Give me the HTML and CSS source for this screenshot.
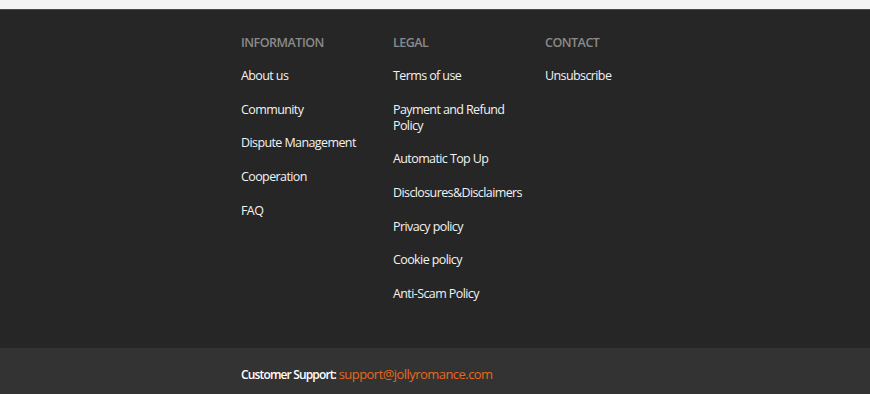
FILE: index.html
```html
<!DOCTYPE html>
<html lang="en">
<head>
  <meta charset="UTF-8">
  <meta name="viewport" content="width=device-width, initial-scale=1.0">
  <title>Footer - JollyRomance</title>
  <link rel="stylesheet" href="styles.css">
</head>
<body>
  <div class="top-strip"></div>

  <footer class="footer">
    <div class="footer-inner">
      <div class="footer-col">
        <h3>Information</h3>
        <ul>
          <li><a href="#">About us</a></li>
          <li><a href="#">Community</a></li>
          <li><a href="#">Dispute Management</a></li>
          <li><a href="#">Cooperation</a></li>
          <li><a href="#">FAQ</a></li>
        </ul>
      </div>

      <div class="footer-col">
        <h3>Legal</h3>
        <ul>
          <li><a href="#">Terms of use</a></li>
          <li><a href="#">Payment and Refund Policy</a></li>
          <li><a href="#">Automatic Top Up</a></li>
          <li><a href="#">Disclosures&amp;Disclaimers</a></li>
          <li><a href="#">Privacy policy</a></li>
          <li><a href="#">Cookie policy</a></li>
          <li><a href="#">Anti-Scam Policy</a></li>
        </ul>
      </div>

      <div class="footer-col">
        <h3>Contact</h3>
        <ul>
          <li><a href="#">Unsubscribe</a></li>
        </ul>
      </div>
    </div>
  </footer>

  <div class="support-bar">
    <div class="support-inner">
      <span class="support-label">Customer Support:</span>
      <a class="support-mail" href="#">support@jollyromance.com</a>
    </div>
  </div>
</body>
</html>
```

FILE: styles.css
```css
* {
  margin: 0;
  padding: 0;
  box-sizing: border-box;
}

body {
  font-family: 'Open Sans', 'Noto Sans', sans-serif;
  background: #333333;
  color: #f0f0f0;
  font-size: 12.5px;
  line-height: 16px;
  letter-spacing: -0.6px;
}

a {
  color: inherit;
  text-decoration: none;
}

.top-strip {
  height: 10px;
  background: #f4f4f4;
  border-bottom: 1px solid #dcdcdc;
}

.footer {
  background: #262626;
  padding: 25px 0 46px;
  border-top: 1px solid #4a4a4a;
  margin-top: -1px;
}

.footer-inner {
  width: 388px;
  margin: 0 auto;
  display: grid;
  grid-template-columns: 152px 152px auto;
}

.footer-col h3 {
  font-size: 12.5px;
  font-weight: 600;
  letter-spacing: -0.5px;
  text-transform: uppercase;
  color: #8a8a8a;
  margin-bottom: 17px;
}

.footer-col ul {
  list-style: none;
  display: flex;
  flex-direction: column;
  gap: 17.7px;
  padding-right: 12px;
}

.footer-col a {
  color: #f2f2f2;
}

.support-bar {
  background: #333333;
  padding: 18px 0 12px;
}

.support-inner {
  width: 388px;
  margin: 0 auto;
}

.support-label {
  font-size: 12px;
  font-weight: 600;
  letter-spacing: -0.85px;
  color: #ffffff;
}

.support-mail {
  font-size: 13px;
  letter-spacing: -0.55px;
  color: #e8691c;
}
```
